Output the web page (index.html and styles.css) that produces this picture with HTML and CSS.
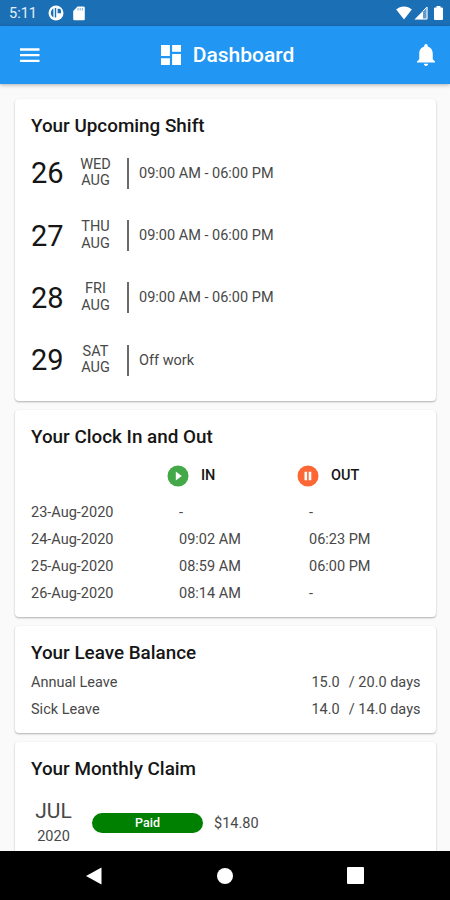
FILE: index.html
```html
<!DOCTYPE html>
<html lang="en">
<head>
    <meta charset="UTF-8">
    <meta name="viewport" content="width=device-width, initial-scale=1.0">
    <title>Dashboard</title>
    <link rel="stylesheet" href="styles.css">
</head>
<body>
    <div class="status-bar">
        <span class="time">5:11</span>
        <svg class="status-app" width="16" height="16" viewBox="0 0 16 16">
            <circle cx="8" cy="8" r="7.5" fill="#fff"/>
            <path d="M5.400 3.500A5.200 5.200 0 0 0 5.400 12.500zM6.800 3h1.400v9.600H6.800zM9.600 3.800h1.600a2 2 0 0 1 1.800 2v2.400H9.600z" fill="#1a6fb5"/>
        </svg>
        <svg class="status-sd" width="12" height="15" viewBox="0 0 12 15">
            <path d="M4.5.5H10.500a1.300 1.300 0 0 1 1.300 1.300V13a1.300 1.300 0 0 1-1.300 1.300H1.500A1.300 1.300 0 0 1 .2 13V5z" fill="#fff"/>
            <path d="M5 2v2.500M7.200 2v2.500M9.400 2v2.500" stroke="#1a6fb5" stroke-width=".8" opacity=".7"/>
        </svg>
        <div class="status-right">
            <svg width="16" height="14" viewBox="0 0 16 14">
                <path d="M8 13.500L.2 3.600C2.400 1.700 5 .6 8 .6s5.600 1.100 7.800 3z" fill="#fff"/>
            </svg>
            <svg width="14" height="14" viewBox="0 0 14 14">
                <path d="M13.500.5v13H.5z" fill="#fff" opacity=".3"/>
                <path d="M9 5v8.500H.5z" fill="#fff"/>
                <path d="M9 5l4-4v12H9" fill="none" stroke="#fff" stroke-width="1"/>
            </svg>
            <svg class="battery" width="9" height="14" viewBox="0 0 9 14">
                <path d="M2.500 1.400V0h4v1.400H8a1 1 0 0 1 1 1V13a1 1 0 0 1-1 1H1a1 1 0 0 1-1-1V2.400a1 1 0 0 1 1-1z" fill="#fff"/>
            </svg>
        </div>
    </div>

    <header class="app-bar">
        <svg class="menu" width="20" height="15" viewBox="0 0 20 15">
            <path d="M0 1.500h19.500M0 7.200h19.500M0 12.900h19.500" stroke="#fff" stroke-width="2.300"/>
        </svg>
        <div class="app-title">
            <svg width="20" height="20" viewBox="3 3 18 18">
                <path d="M3 13h8V3H3v10zm0 8h8v-6H3v6zm10 0h8V11h-8v10zm0-18v6h8V3h-8z" fill="#fff"/>
            </svg>
            <h1>Dashboard</h1>
        </div>
        <svg class="bell" width="18" height="22" viewBox="4 2.500 16 19.500">
            <path d="M12 22c1.100 0 2-.9 2-2h-4c0 1.100.9 2 2 2zm6-6v-5c0-3.070-1.640-5.640-4.500-6.320V4c0-.83-.67-1.500-1.500-1.500s-1.500.67-1.500 1.500v.68C7.630 5.360 6 7.920 6 11v5l-2 2v1h16v-1l-2-2z" fill="#fff"/>
        </svg>
    </header>

    <main class="content">
        <section class="card shift-card">
            <h2>Your Upcoming Shift</h2>
            <div class="shift">
                <span class="day">26</span>
                <span class="date">WED<br>AUG</span>
                <span class="hours">09:00 AM - 06:00 PM</span>
            </div>
            <div class="shift">
                <span class="day">27</span>
                <span class="date">THU<br>AUG</span>
                <span class="hours">09:00 AM - 06:00 PM</span>
            </div>
            <div class="shift">
                <span class="day">28</span>
                <span class="date">FRI<br>AUG</span>
                <span class="hours">09:00 AM - 06:00 PM</span>
            </div>
            <div class="shift">
                <span class="day">29</span>
                <span class="date">SAT<br>AUG</span>
                <span class="hours">Off work</span>
            </div>
        </section>

        <section class="card clock-card">
            <h2>Your Clock In and Out</h2>
            <div class="clock-row clock-head">
                <span></span>
                <span class="clock-label">
                    <svg width="22" height="22" viewBox="0 0 22 22">
                        <circle cx="11" cy="11" r="10.500" fill="#43a847"/>
                        <path d="M8.800 6.500v9l6-4.500z" fill="#fff"/>
                    </svg>
                    IN
                </span>
                <span class="clock-label">
                    <svg width="22" height="22" viewBox="0 0 22 22">
                        <circle cx="11" cy="11" r="10.500" fill="#fd6736"/>
                        <path d="M7.500 6.800h2.600v8.400H7.500zM11.700 6.800h2.600v8.400h-2.600z" fill="#fff"/>
                    </svg>
                    OUT
                </span>
            </div>
            <div class="clock-row"><span>23-Aug-2020</span><span class="clock-time">-</span><span class="clock-time">-</span></div>
            <div class="clock-row"><span>24-Aug-2020</span><span class="clock-time">09:02 AM</span><span class="clock-time">06:23 PM</span></div>
            <div class="clock-row"><span>25-Aug-2020</span><span class="clock-time">08:59 AM</span><span class="clock-time">06:00 PM</span></div>
            <div class="clock-row"><span>26-Aug-2020</span><span class="clock-time">08:14 AM</span><span class="clock-time">-</span></div>
        </section>

        <section class="card leave-card">
            <h2>Your Leave Balance</h2>
            <div class="leave"><span>Annual Leave</span><span class="used">15.0</span><span>/ 20.0 days</span></div>
            <div class="leave"><span>Sick Leave</span><span class="used">14.0</span><span>/ 14.0 days</span></div>
        </section>

        <section class="card claim-card">
            <h2>Your Monthly Claim</h2>
            <div class="claim">
                <div class="claim-date">
                    <span class="month">JUL</span>
                    <span class="year">2020</span>
                </div>
                <span class="badge">Paid</span>
                <span class="amount">$14.80</span>
            </div>
        </section>
    </main>

    <nav class="nav-bar">
        <svg width="16" height="18" viewBox="0 0 16 18"><path d="M15.500.5v17L0 9z" fill="#fff"/></svg>
        <svg width="16" height="16" viewBox="0 0 16 16"><circle cx="8" cy="8" r="8" fill="#fff"/></svg>
        <svg width="17" height="17" viewBox="0 0 17 17"><rect width="17" height="17" rx="1" fill="#fff"/></svg>
    </nav>
</body>
</html>
```

FILE: styles.css
```css
* {
    margin: 0;
    padding: 0;
    box-sizing: border-box;
}

body {
    display: flex;
    flex-direction: column;
    height: 900px;
    overflow: hidden;
    background: #fafafa;
    color: #484848;
    font-family: Roboto, "Liberation Sans", sans-serif;
    font-size: 14.5px;
}

svg {
    display: block;
    flex: none;
}

.status-bar {
    display: flex;
    align-items: center;
    flex: none;
    height: 25.5px;
    padding: 1px 7px 0 9px;
    background: #1a6fb5;
    color: #e4eff9;
}

.time {
    width: 39px;
    padding-top: 1px;
    font-size: 14.5px;
}

.status-sd {
    margin-left: 9px;
}

.status-right {
    display: flex;
    align-items: center;
    gap: 2px;
    margin-left: auto;
}

.battery {
    margin-left: 4px;
}

.app-bar {
    display: flex;
    align-items: center;
    justify-content: space-between;
    flex: none;
    height: 58px;
    padding: 1px 15px 0 20px;
    background: #2196f3;
    color: #fff;
    box-shadow: 0 1px 4px rgba(0, 0, 0, 0.3);
    z-index: 1;
}

.app-title {
    display: flex;
    align-items: center;
    gap: 12px;
    margin-right: 2px;
}

h1 {
    font-size: 21px;
    font-weight: 500;
    line-height: 26px;
}

.content {
    flex: 1;
    min-height: 0;
    overflow: hidden;
    padding: 15.5px 14.5px 0 15px;
}

.card {
    padding: 16px 15px 10.5px 16px;
    margin-bottom: 9px;
    background: #fff;
    border-radius: 4px;
    box-shadow: 0 1px 2px rgba(0, 0, 0, 0.3);
}

h2 {
    color: #161616;
    font-size: 18.85px;
    font-weight: 500;
    line-height: 22px;
}

.shift-card {
    padding-bottom: 9.5px;
}

.shift-card h2 {
    margin-bottom: 5px;
}

.shift {
    display: flex;
    align-items: center;
    height: 62.4px;
}

.day {
    width: 42px;
    color: #161616;
    font-size: 29px;
}

.date {
    width: 45px;
    line-height: 16.5px;
    text-align: center;
}

.hours {
    margin-left: 9px;
    padding-left: 10px;
    border-left: 2px solid #6a6a6a;
    line-height: 31px;
}

.clock-row {
    display: grid;
    grid-template-columns: 136px 130px 1fr;
    align-items: center;
    height: 27px;
}

.clock-head {
    height: 50.5px;
    padding-top: 5px;
}

.clock-label {
    display: flex;
    align-items: center;
    gap: 12px;
    color: #161616;
    font-weight: 500;
}

.clock-time {
    padding-left: 12px;
}

.leave-card {
    padding-bottom: 10px;
}

.leave-card h2 {
    margin-bottom: 4.5px;
}

.leave {
    display: flex;
    align-items: center;
    height: 27px;
}

.used {
    margin: 0 9px 0 auto;
}

.claim {
    display: flex;
    align-items: center;
    margin-top: 18.5px;
}

.claim-date {
    display: flex;
    flex-direction: column;
    align-items: center;
    width: 45px;
}

.month {
    font-size: 21px;
    line-height: 27px;
}

.year {
    line-height: 23px;
}

.badge {
    width: 111px;
    margin: 0 11px 0 16px;
    border-radius: 10px;
    background: #008000;
    color: #fff;
    font-size: 12.5px;
    font-weight: 500;
    line-height: 20px;
    text-align: center;
}

.nav-bar {
    display: flex;
    align-items: center;
    justify-content: space-between;
    flex: none;
    height: 49.5px;
    padding: 1px 86px 0;
    background: #000;
    z-index: 1;
}
```
